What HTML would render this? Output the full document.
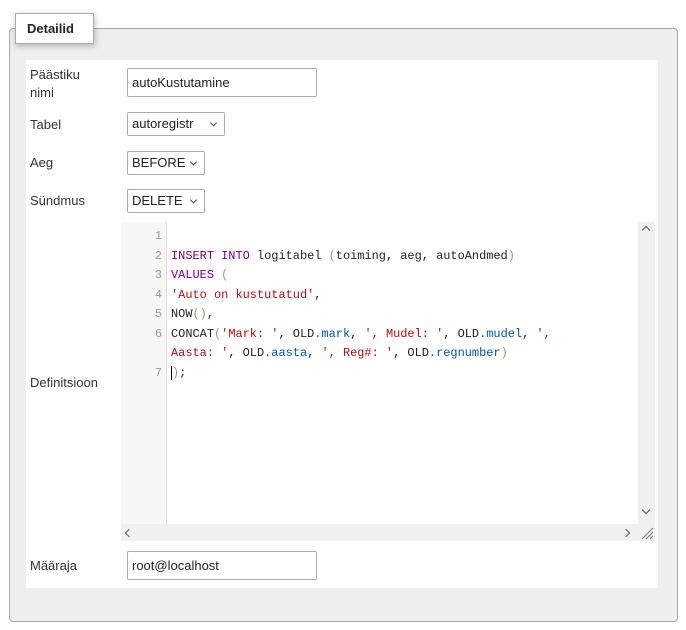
<!DOCTYPE html><html><head><style>
body{margin:0;background:#fff;font-family:"Liberation Sans","DejaVu Sans",sans-serif;font-size:13px;color:#333;width:686px;height:630px;position:relative;overflow:hidden}
.fs{position:absolute;left:9px;top:28px;width:667px;height:592px;background:#eee;border:1px solid #aaa;border-radius:4px}
.lg{position:absolute;left:15px;top:13px;width:77px;height:29px;background:#fff;border:1px solid #aaa;box-shadow:1px 2px 6px rgba(0,0,0,.25);font-weight:bold;font-size:13px;line-height:29px;text-indent:11px;color:#222}
.in{position:absolute;left:26px;top:60px;width:632px;height:528px;background:#fff}
.l{position:absolute;left:30px;color:#333}
.box{position:absolute;border:1px solid #aaa;border-radius:2px;background:#fff;box-sizing:border-box;padding-left:4px;color:#222}
.sel:after{content:"";position:absolute;right:8px;top:50%;width:4px;height:4px;border-right:1px solid #444;border-bottom:1px solid #444;transform:translateY(-70%) rotate(45deg)}
.ed{position:absolute;left:121px;top:222px;width:534px;height:319px;background:#fff}
.gut{position:absolute;left:0;top:0;width:45px;height:302px;background:#f7f7f7;border-right:1px solid #ddd}
.vs{position:absolute;left:517px;top:0;width:17px;height:302px;background:#f0f0f0}
.hs{position:absolute;left:0;top:302px;width:534px;height:17px;background:#f0f0f0}
.code{position:absolute;left:0;top:0;font-family:"Liberation Mono",monospace;font-size:11.95px;color:#222}
.ln{position:absolute;left:0;width:41px;text-align:right;color:#999}
.cl{position:absolute;left:50px;white-space:pre}
.k{color:#708}.s{color:#a11}.p{color:#997}.v{color:#05a}
</style></head><body>
<div class="fs"></div>
<div class="lg">Detailid</div>
<div class="in"></div>
<div class="l" style="top:66px;line-height:18px">Päästiku<br>nimi</div>
<div class="box" style="left:127px;top:68px;width:190px;height:29px;line-height:27px">autoKustutamine</div>
<div class="l" style="top:117px">Tabel</div>
<div class="box sel" style="left:127px;top:112px;width:98px;height:24px;line-height:22px">autoregistr</div>
<div class="l" style="top:155px">Aeg</div>
<div class="box sel" style="left:127px;top:151px;width:78px;height:24px;line-height:22px">BEFORE</div>
<div class="l" style="top:193px">Sündmus</div>
<div class="box sel" style="left:127px;top:189px;width:78px;height:24px;line-height:22px">DELETE</div>
<div class="l" style="top:375px">Definitsioon</div>
<div class="ed"><div class="gut"></div><div class="vs"><div style="position:absolute;left:5px;top:5px;width:5px;height:5px;border-left:1.5px solid #555;border-top:1.5px solid #555;transform:rotate(45deg)"></div><div style="position:absolute;left:5px;top:285px;width:5px;height:5px;border-right:1.5px solid #555;border-bottom:1.5px solid #555;transform:rotate(45deg)"></div></div><div class="hs"><div style="position:absolute;left:5px;top:6px;width:5px;height:5px;border-left:1.5px solid #555;border-bottom:1.5px solid #555;transform:rotate(45deg)"></div><div style="position:absolute;left:502px;top:6px;width:5px;height:5px;border-right:1.5px solid #555;border-top:1.5px solid #555;transform:rotate(45deg)"></div><svg style="position:absolute;left:519px;top:2px" width="14" height="14"><path d="M2 13L13 2M6 13L13 6M10 13L13 10" stroke="#777" stroke-width="1"/></svg></div>
<div class="code">
<div class="ln" style="top:7px">1</div>
<div class="ln" style="top:27px">2</div><div class="cl" style="top:27px"><span class="k">INSERT INTO</span> logitabel <span class="p">(</span>toiming, aeg, autoAndmed<span class="p">)</span></div>
<div class="ln" style="top:46px">3</div><div class="cl" style="top:46px"><span class="k">VALUES</span> <span class="p">(</span></div>
<div class="ln" style="top:66px">4</div><div class="cl" style="top:66px"><span class="s">'Auto on kustutatud'</span>,</div>
<div class="ln" style="top:85px">5</div><div class="cl" style="top:85px">NOW<span class="p">()</span>,</div>
<div class="ln" style="top:105px">6</div><div class="cl" style="top:105px">CONCAT<span class="p">(</span><span class="s">'Mark: '</span>, OLD<span class="v">.mark</span>, <span class="s">', Mudel: '</span>, OLD<span class="v">.mudel</span>, <span class="s">',</span></div>
<div class="cl" style="top:124px"><span class="s">Aasta: '</span>, OLD<span class="v">.aasta</span>, <span class="s">', Reg#: '</span>, OLD<span class="v">.regnumber</span><span class="p">)</span></div>
<div class="ln" style="top:144px">7</div><div class="cl" style="top:144px;border-left:1px solid #000;left:50px"><span class="p">)</span>;</div>
</div></div>
<div class="l" style="top:558px">Määraja</div>
<div class="box" style="left:127px;top:551px;width:190px;height:29px;line-height:27px">root@localhost</div>
</body></html>
